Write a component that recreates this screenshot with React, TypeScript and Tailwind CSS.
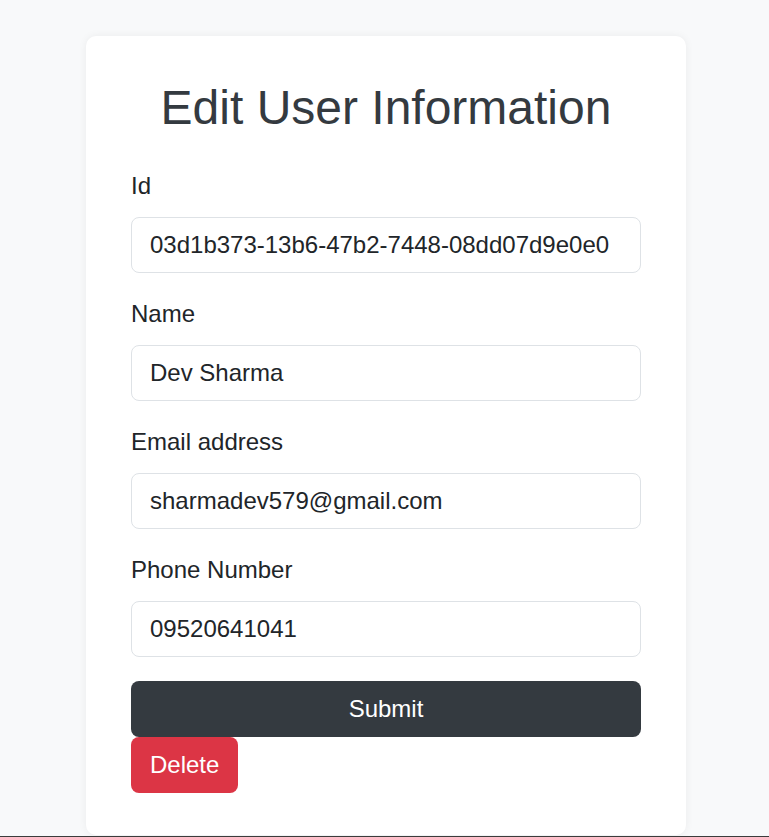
import { JSX, useState } from 'react'

interface FieldProps {
  label: string
  value: string
  onChange: (v: string) => void
  type?: string
  last?: boolean
}

function Field({ label, value, onChange, type = 'text', last = false }: FieldProps): JSX.Element {
  return (
    <div className={last ? 'mb-[24px]' : 'mb-[23px]'}>
      <label className="block mb-[13px] text-[24px] leading-[36px] text-[#212529]">{label}</label>
      <input
        type={type}
        value={value}
        onChange={(e): void => onChange(e.target.value)}
        className="block w-full h-[56px] px-[18px] py-[9px] bg-white border border-[#dee2e6] rounded-lg text-[24px] leading-[36px] text-[#212529] focus:outline-none"
      />
    </div>
  )
}

export default function App(): JSX.Element {
  const [id, setId] = useState('03d1b373-13b6-47b2-7448-08dd07d9e0e0')
  const [name, setName] = useState('Dev Sharma')
  const [email, setEmail] = useState('sharmadev579@gmail.com')
  const [phone, setPhone] = useState('09520641041')

  return (
    <div className="h-[837px] flex flex-col bg-[#f8f9fa] font-['Liberation_Sans',Arial,sans-serif]">
      <div className="h-[836px] overflow-hidden pt-[36px]">
        <div className="w-[600px] ml-[86px] bg-white rounded-[10px] shadow-[0_0_8px_rgba(0,0,0,0.06)] px-[45px] pt-[43px] pb-[42px]">
          <h1 className="text-center text-[48px] leading-[58px] text-[#343a40] mb-[31px]">Edit User Information</h1>

          <form onSubmit={(e): void => e.preventDefault()}>
            <Field label="Id" value={id} onChange={setId} />
            <Field label="Name" value={name} onChange={setName} />
            <Field label="Email address" value={email} onChange={setEmail} type="email" />
            <Field label="Phone Number" value={phone} onChange={setPhone} last />

            <button
              type="submit"
              className="block w-full h-[56px] bg-[#343a40] text-white text-[24px] leading-[36px] rounded-lg border border-transparent"
            >
              Submit
            </button>
          </form>
          <button
            type="button"
            className="block h-[56px] px-[18px] bg-[#dc3545] text-white text-[24px] leading-[36px] rounded-lg border border-transparent"
          >
            Delete
          </button>
        </div>
      </div>
      <div className="h-px bg-[#3c3c3c]" />
    </div>
  )
}
